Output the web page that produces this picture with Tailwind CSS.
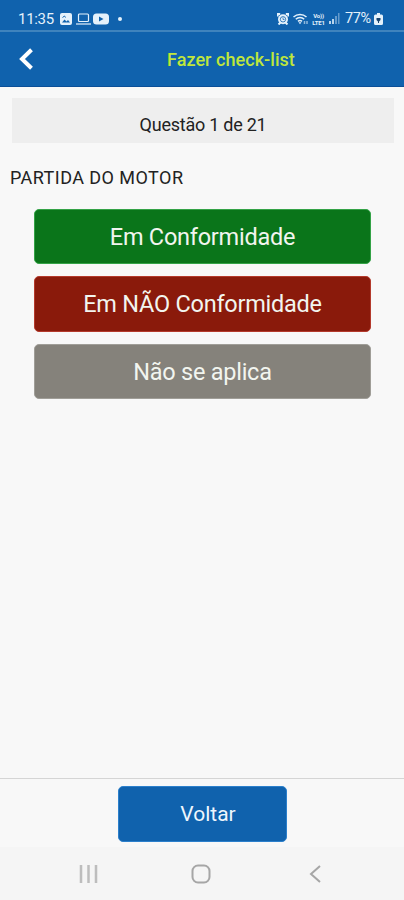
<!DOCTYPE html>
<html lang="pt-BR">
<head>
    <meta charset="UTF-8">
    <meta name="viewport" content="width=device-width, initial-scale=1.0">
    <title>Fazer check-list</title>
    <script src="https://cdn.jsdelivr.net/npm/@tailwindcss/browser@4"></script>
</head>
<body class="flex h-screen flex-col overflow-hidden bg-[#f8f8f8] font-['Roboto',sans-serif] text-[#222]">

    <!-- Status bar -->
    <div class="flex h-8 shrink-0 items-center justify-between border-b-2 border-[#3f83bd] bg-[#1062ad] pt-2 pr-[21px] pl-[18px] text-[#e4f1fb]">
        <div class="flex items-center">
            <span class="w-[42px] text-[15px] leading-none tracking-[-0.3px]">11:35</span>
            <svg class="h-3 w-3" viewBox="0 0 12 12"><rect width="12" height="12" rx="2" fill="currentColor"/><path d="M2 9.5l2.5-3 2 2 1.5-1.5 2 2.5z" fill="#1062ad"/><path d="M2.500 4.500l2-1.500 1 1.500" fill="none" stroke="#1062ad"/></svg>
            <svg class="ml-1 h-3 w-[15px]" viewBox="0 0 15 12" fill="none" stroke="currentColor" stroke-width="1.2"><rect x="2.5" y="1" width="10" height="7.5" rx="1"/><path d="M0 11h15"/></svg>
            <svg class="ml-0.5 h-3 w-4" viewBox="0 0 16 12"><rect y=".5" width="16" height="11" rx="3.5" fill="currentColor"/><path d="M6 3.5v5L10.500 6z" fill="#1062ad"/></svg>
            <span class="ml-[9px] h-1 w-1 rounded-full bg-current"></span>
        </div>
        <div class="flex items-center">
            <svg class="h-3 w-3" viewBox="0 0 12 12"><circle cx="6" cy="6.300" r="5" fill="currentColor"/><path d="M.7 3.500V1h2.500M8.800 1h2.500v2.500M1.500 11.500l2-2M10.500 11.500l-2-2" fill="none" stroke="currentColor" stroke-width="2"/><circle cx="6" cy="6.300" r="2.700" fill="none" stroke="#1062ad" stroke-width=".8"/><path d="M6 4.500v2h1.500" fill="none" stroke="#1062ad" stroke-width=".7"/></svg>
            <svg class="ml-1 h-3 w-4" viewBox="0 0 16 12" fill="none" stroke="currentColor" stroke-width="1.500"><path d="M.5 4a9.500 9.500 0 0 1 13 0M2.800 6.200a6 6 0 0 1 8.400 0M5 8.400a3 3 0 0 1 4 0"/><path d="M5.500 9.200h3L7 11.200z" fill="currentColor" stroke="none"/><path d="M11.500 11V8M14 8v3" opacity=".6"/></svg>
            <div class="ml-0.5 flex w-[15px] flex-col items-center text-[6px] leading-[7px] font-bold tracking-[-0.2px]"><span>Vo))</span><span>LTE1</span></div>
            <svg class="ml-0.5 h-3 w-3" viewBox="0 0 12 12" fill="currentColor"><path d="M1 11V8h2v3zM4 11V6h2v5z" opacity=".8"/><path d="M7 11V3h2v8zM10 11V0h1.500v11z" opacity=".4"/></svg>
            <span class="ml-[5px] w-[27px] text-[14.500px] leading-none tracking-[-0.4px] whitespace-nowrap">77%</span>
            <svg class="ml-0.5 h-3 w-[9px]" viewBox="0 0 9 12"><path d="M3 0h3v1.500h1.500A1.500 1.500 0 0 1 9 3v7.500A1.500 1.500 0 0 1 7.500 12h-6A1.500 1.500 0 0 1 0 10.500V3a1.500 1.500 0 0 1 1.500-1.500H3z" fill="currentColor"/><path d="M2.500 5h4v2L5 8.500V10H4V8.500L2.500 7z" fill="#17436f"/></svg>
        </div>
    </div>

    <!-- Header -->
    <header class="flex h-[55px] shrink-0 items-center border-b border-[#0b4f98] bg-[#1062ad] pl-[19px]">
        <button class="w-[148px]" aria-label="Voltar">
            <svg class="h-[22px] w-[14px]" viewBox="0 0 14 22" fill="none" stroke="#fff" stroke-width="4"><path d="M12.500 1.800L3 11l9.500 9.200"/></svg>
        </button>
        <h1 class="text-[18px] font-medium tracking-[0.05px] whitespace-nowrap text-[#bfe63c]">Fazer check-list</h1>
    </header>

    <!-- Question -->
    <main class="flex-1">
        <div class="mt-[11px] mr-[10px] ml-3 flex h-[45px] items-center justify-center bg-[#eeeeee] pt-[7px] text-[18px] tracking-[-0.25px]">
            <span class="whitespace-nowrap">Questão 1 de 21</span>
        </div>
        <p class="mt-[21px] ml-[10px] text-[18px] leading-[27px] tracking-[0.45px] whitespace-nowrap">PARTIDA DO MOTOR</p>
        <div class="mt-[17.500px] mr-[33px] ml-[34px] flex flex-col gap-3 text-[23.500px] tracking-[-0.25px] text-[#f2f5ef]">
            <button class="h-[55.500px] rounded-[5px] border border-[#34a347] bg-[#0a751a] pt-0.5">Em Conformidade</button>
            <button class="h-[55.500px] rounded-[5px] border border-[#b43a2c] bg-[#8a1a0b] pt-0.5">Em NÃO Conformidade</button>
            <button class="h-[55.500px] rounded-[5px] border border-[#a09e98] bg-[#85827b] pt-0.5">Não se aplica</button>
        </div>
    </main>

    <!-- Footer -->
    <footer class="flex h-[69px] shrink-0 justify-center border-t border-[#d5d5d5] pt-[7px]">
        <button class="h-14 w-[169px] rounded-[5px] border border-[#2c80cc] bg-[#1062ad] pt-0.5 pl-3 text-[21px] text-[#eef6fd]">Voltar</button>
    </footer>

    <!-- Android navigation -->
    <nav class="flex h-[53px] shrink-0 items-center bg-[#f5f5f5] pl-[79px]">
        <svg class="h-[18px] w-[19px]" viewBox="0 0 19 18" stroke="#bdbdbd" stroke-width="2.500"><path d="M2 0v18M9.500 0v18M17 0v18"/></svg>
        <svg class="ml-[93px] h-5 w-5" viewBox="0 0 20 20" fill="none" stroke="#a6a6a6" stroke-width="2"><rect x="1.500" y="1.500" width="17" height="17" rx="5.500"/></svg>
        <svg class="ml-[98px] h-[18px] w-3" viewBox="0 0 12 18" fill="none" stroke="#a6a6a6" stroke-width="2"><path d="M11 1L2 9l9 8"/></svg>
    </nav>
</body>
</html>
